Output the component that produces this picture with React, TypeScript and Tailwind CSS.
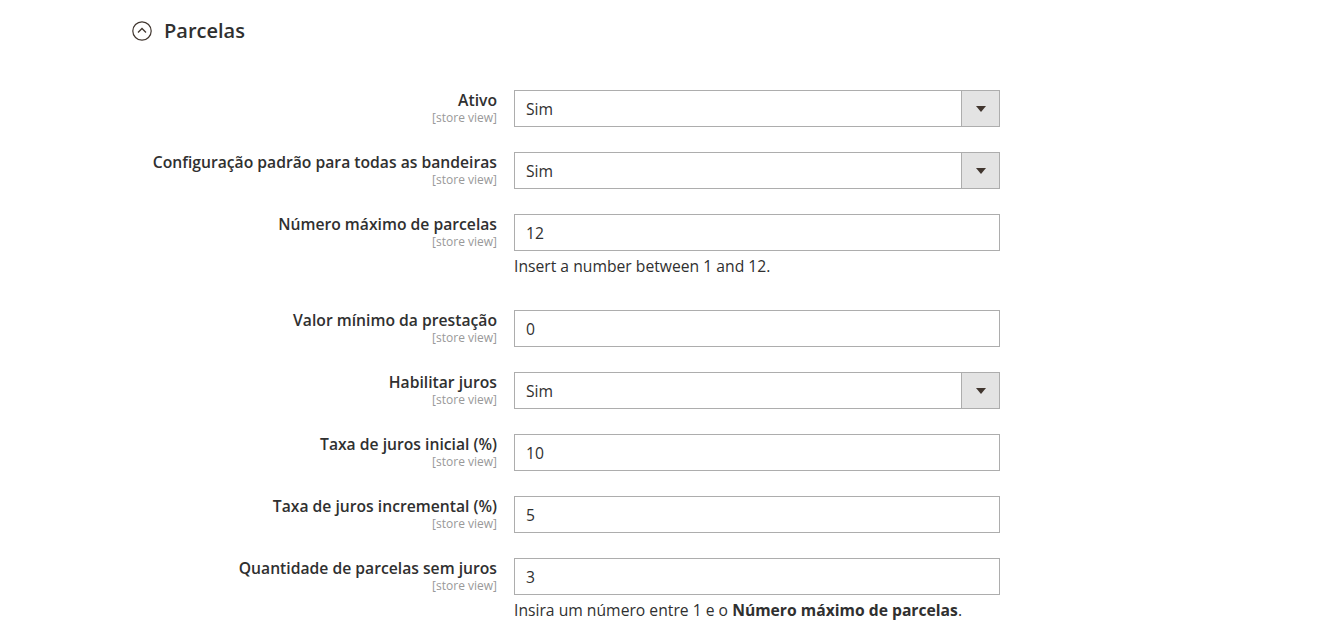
import React from 'react';

type Field = {
  label: string;
  value: string;
  select?: boolean;
  note?: React.ReactNode;
};

const fields: Field[] = [
  { label: 'Ativo', value: 'Sim', select: true },
  { label: 'Configuração padrão para todas as bandeiras', value: 'Sim', select: true },
  { label: 'Número máximo de parcelas', value: '12', note: 'Insert a number between 1 and 12.' },
  { label: 'Valor mínimo da prestação', value: '0' },
  { label: 'Habilitar juros', value: 'Sim', select: true },
  { label: 'Taxa de juros inicial (%)', value: '10' },
  { label: 'Taxa de juros incremental (%)', value: '5' },
  {
    label: 'Quantidade de parcelas sem juros',
    value: '3',
    note: (
      <>
        Insira um número entre 1 e o <strong className="font-bold">Número máximo de parcelas</strong>.
      </>
    ),
  },
];

const FieldRow: React.FC<{ field: Field }> = ({ field }) => (
  <div className="flex">
    <div className="w-[497px] text-right pt-[1px]">
      <div className="text-[15.7px] leading-[18px] font-semibold text-[#303030]">{field.label}</div>
      <div className="mt-[2px] text-[12px] leading-[13px] text-[#999999]">[store view]</div>
    </div>
    <div className="ml-[17px] w-[486px]">
      <div className="relative h-[37px] border border-[#adadad] bg-white flex items-center">
        <span className="pl-[11px] pt-[1px] text-[15.7px] leading-[20px] text-[#303030]">{field.value}</span>
        {field.select && (
          <div className="absolute right-0 top-0 h-full w-[38px] bg-[#e3e3e3] border-l border-[#adadad] flex items-center justify-center">
            <svg width="10" height="6" viewBox="0 0 10 6">
              <path d="M0 0 L10 0 L5 6 Z" fill="#41362f" />
            </svg>
          </div>
        )}
      </div>
      {field.note && (
        <div className="mt-[5px] mb-[9px] text-[15.7px] leading-[20px] text-[#303030]">{field.note}</div>
      )}
    </div>
  </div>
);

export default function App() {
  return (
    <div className="w-[1317px] h-[630px] bg-white overflow-hidden" style={{ fontFamily: '"Open Sans", sans-serif' }}>
      <div className="pl-[132px] pt-[17px] flex items-center gap-[12px]">
        <svg width="20" height="20" viewBox="0 0 20 20">
          <circle cx="10" cy="10" r="9.2" fill="none" stroke="#41362f" strokeWidth="1.2" />
          <path d="M6 11.5 L10 7.5 L14 11.5" fill="none" stroke="#41362f" strokeWidth="1.3" />
        </svg>
        <span className="text-[20px] leading-[28px] font-semibold text-[#303030]">Parcelas</span>
      </div>
      <div className="mt-[45px] flex flex-col gap-[25px]">
        {fields.map((f) => (
          <FieldRow key={f.label} field={f} />
        ))}
      </div>
    </div>
  );
}
